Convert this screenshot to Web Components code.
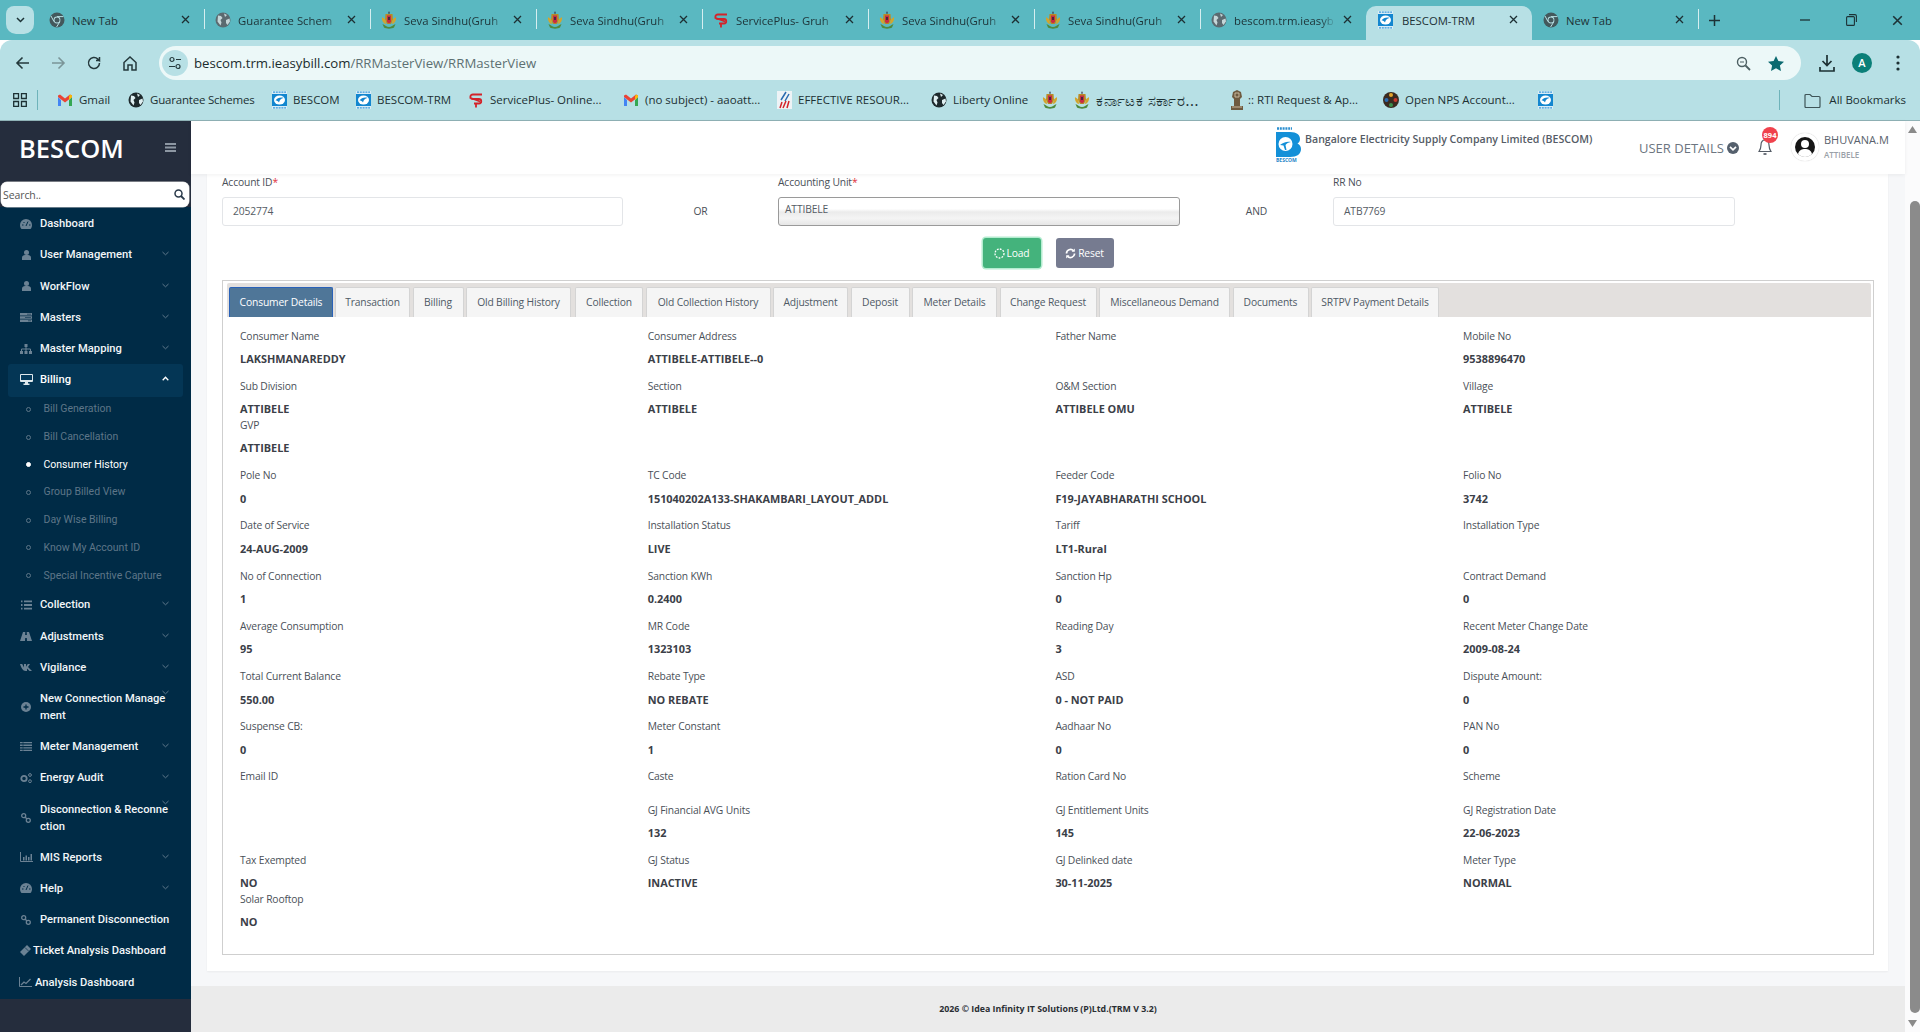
<!DOCTYPE html>
<html><head><meta charset="utf-8"><title>BESCOM-TRM</title>
<style>
html,body{margin:0;height:1032px;overflow:hidden;background:#fff;font-family:"Open Sans","Noto Sans",sans-serif}
body{display:flex;flex-direction:column}
</style></head>
<body>
<browser-chrome></browser-chrome>
<app-shell></app-shell>
<script>
const S=(w,h,vb,c)=>`<svg width="${w}" height="${h}" viewBox="${vb}" style="display:block;flex:none">${c}</svg>`;
const FAV={
 chrome:S(16,16,'0 0 16 16','<circle cx="8" cy="8" r="7.5" fill="#43585c"/><circle cx="8" cy="8" r="3.4" fill="#b7dfe3"/><circle cx="8" cy="8" r="2.5" fill="#43585c"/><path d="M8 4.6h6.4M5 9.6L2 4M10.8 9.8L7.6 15" stroke="#b7dfe3" stroke-width="1"/>'),
 globe:S(16,16,'0 0 16 16','<circle cx="8" cy="8" r="7.5" fill="#5b6a70"/><path d="M3 3.5l3 .5 1.500 2-2 2 1 2.500-1 3-3-4zM9 1.500l3 1.500-2 2zM11 8l3.500-1.500.5 3-2.500 3.500-1.500-2z" fill="#c5d6d8"/>'),
 globeDark:S(16,16,'0 0 16 16','<circle cx="8" cy="8" r="7.5" fill="#1e2a2d"/><path d="M3 3.500l3 .5 1.500 2-2 2 1 2.500-1 3-3-4zM9 1.500l3 1.500-2 2zM11 8l3.500-1.500.5 3-2.500 3.500-1.500-2z" fill="#dfeff1"/>'),
 emblem:S(16,18,'0 0 16 18','<path d="M8 0l1 2.500H7z" fill="#3c3340"/><path d="M4.500 3h7l.5 6-2 4H6L4 9z" fill="#b98a26"/><path d="M1 6c1 1 2.500 1.500 3.500 3L5 13C3 13 .5 10 1 6zM15 6c-1 1-2.500 1.500-3.500 3L11 13c2 0 4.500-3 4-7z" fill="#d2a52e"/><path d="M6 4.500h4v6.500l-2 1.500L6 11z" fill="#c92b45"/><path d="M7.200 6h1.600v3H7.200z" fill="#2c2a38"/><path d="M1.500 13c3 1.500 4 3 6.500 3s3.500-1.500 6.500-3L13 16.500c-2 1.500-8 1.500-10 0z" fill="#4f8a3c"/>'),
 sp:S(16,16,'0 0 16 16','<path d="M14 2.500H5C1.500 2.500 1.500 7 5 7h6c3 0 3 4.500 0 4.500H6M1.500 5.500L12 9.500M8 11.500v4" fill="none" stroke="#d3232a" stroke-width="1.800"/>'),
 bescom:S(15,18,'0 0 15 18','<rect width="15" height="18" fill="#d8ecf7"/><path d="M1 1.200h13M1 16.800h13" stroke="#3a9ad8" stroke-width="1.200" stroke-dasharray="2 .8"/><rect y="3" width="15" height="12" fill="#1386cf"/><ellipse cx="7.500" cy="9" rx="5.500" ry="4.500" fill="#fff"/><path d="M3.500 9.500C5 7 9 6 11.500 7 9 7.500 7.500 9 7 11.500 6 10 5 9.500 3.500 9.500z" fill="#1386cf"/>'),
 gmail:S(16,13,'0 0 16 13','<path d="M1 3v9h3V6z" fill="#4285f4"/><path d="M15 3v9h-3V6z" fill="#34a853"/><path d="M1 3l7 5.500L15 3v-1.500L13 .5 8 4.500 3 .5 1 1.500z" fill="#ea4335"/><path d="M12 2.500l1-2 2 1V3l-3 3z" fill="#fbbc04"/>'),
 eff:S(15,18,'0 0 15 18','<rect width="15" height="18" fill="#eef3f6"/><path d="M9 1L4 9M12 3L8 10" stroke="#2b6bb0" stroke-width="1.500"/><path d="M5 11l-2 6M9 10l-3 7M12 10l-2 7" stroke="#d3232a" stroke-width="1.500"/>'),
 rti:S(14,20,'0 0 14 20','<path d="M3 2l4-2 4 2 1 5-2 2v7h3v4H1v-4h3V9L2 7z" fill="#6e5a40"/><path d="M5 3h4v4H5zM2 17h10" stroke="#c8b79c" stroke-width="1" fill="none"/>'),
 nps:S(16,18,'0 0 16 18','<circle cx="8" cy="9" r="8" fill="#3a2a20"/><circle cx="8" cy="4" r="2" fill="#e2a32b"/><circle cx="12.500" cy="9" r="2" fill="#c8372b"/><circle cx="8" cy="14" r="2" fill="#3b8f4b"/><circle cx="3.500" cy="9" r="2" fill="#2b6bb0"/>')
};
const X=(c='#1d2f33',s=9)=>S(s,s,'0 0 9 9',`<path d="M1 1l7 7M8 1L1 8" stroke="${c}" stroke-width="1.300"/>`);
const G='#6b8294';
const NI={
 dash:`<svg width="12" height="10" viewBox="0 0 12 10"><path d="M6 0a6 6 0 0 0-6 6c0 1.500.5 3 1.500 4h9C11.500 9 12 7.500 12 6a6 6 0 0 0-6-6z" fill="${G}"/><path d="M6 7L8 2.500M2 6h1.500M9 6h1.500M3.500 3l1 1" stroke="#002b46" stroke-width="1"/></svg>`,
 user:`<svg width="9" height="10" viewBox="0 0 9 10"><circle cx="4.500" cy="2.500" r="2.500" fill="${G}"/><path d="M0 10V7.500C0 6 1.500 5 3 5h3c1.500 0 3 1 3 2.500V10z" fill="${G}"/></svg>`,
 server:`<svg width="12" height="9" viewBox="0 0 12 9"><path d="M0 0h12v2.400H0zM0 3.300h12v2.400H0zM0 6.600h12V9H0z" fill="${G}"/><path d="M7 1.200h4M5 4.500h6M8 7.800h3" stroke="#002b46" stroke-width=".6"/></svg>`,
 map:`<svg width="12" height="10" viewBox="0 0 12 10"><path d="M4.500 0h3v3h-3zM0 7h3v3H0zM4.500 7h3v3h-3zM9 7h3v3H9z" fill="${G}"/><path d="M6 3v4M1.500 7V5h9v2" stroke="${G}" fill="none"/></svg>`,
 mon:`<svg width="13" height="11" viewBox="0 0 13 11"><path d="M0 1q0-1 1-1h11q1 0 1 1v6q0 1-1 1H8v1.500h1.500V11h-6V9.500H5V8H1Q0 8 0 7z" fill="#dfe8ec"/><path d="M1 1h11v5H1z" fill="#043a5c"/></svg>`,
 list:`<svg width="11" height="10" viewBox="0 0 11 10"><path d="M3 .5h8v1.800H3zM3 4.100h8v1.800H3zM3 7.700h8v1.800H3zM0 .5h1.500v1.800H0zM0 4.100h1.500v1.800H0zM0 7.700h1.500v1.800H0z" fill="${G}"/></svg>`,
 road:`<svg width="12" height="9" viewBox="0 0 12 9"><path d="M3 0h2.300l-.2 3h1.800L6.700 0H9l3 9H7l-.2-3H5.200L5 9H0z" fill="${G}"/></svg>`,
 vk:`<svg width="12" height="7" viewBox="0 0 12 7"><path d="M0 0h2.200L4 3.600V0h2v2.800L7.800 0H10L8 3l4 4H9.500L7 4.500V7H5.500C3 7 1 3.500 0 0z" fill="${G}"/></svg>`,
 plus:`<svg width="10" height="10" viewBox="0 0 10 10"><circle cx="5" cy="5" r="5" fill="${G}"/><path d="M5 2.500v5M2.500 5h5" stroke="#002b46" stroke-width="1.300"/></svg>`,
 rows:`<svg width="12" height="9" viewBox="0 0 12 9"><path d="M0 .5h12M0 3.200h12M0 5.900h12M0 8.500h12" stroke="${G}" stroke-width="1.400"/><path d="M3 0v9" stroke="#002b46" stroke-width=".6"/></svg>`,
 cogs:`<svg width="12" height="10" viewBox="0 0 12 10"><circle cx="4" cy="5.500" r="2.700" fill="none" stroke="${G}" stroke-width="1.800"/><circle cx="10" cy="2" r="1.400" fill="none" stroke="${G}"/><circle cx="10" cy="8.200" r="1.400" fill="none" stroke="${G}"/></svg>`,
 link:`<svg width="10" height="10" viewBox="0 0 10 10"><circle cx="2.700" cy="2.700" r="2" fill="none" stroke="${G}" stroke-width="1.300"/><circle cx="7.300" cy="7.300" r="2" fill="none" stroke="${G}" stroke-width="1.300"/><path d="M4 4l2 2" stroke="${G}" stroke-width="1.300"/></svg>`,
 bars:`<svg width="13" height="10" viewBox="0 0 13 10"><path d="M.5 0v9.500H13" stroke="${G}" fill="none"/><path d="M3 5h1.500v3.500H3zM5.500 3.500H7v5H5.500zM8 5h1.500v3.500H8zM10.500 2H12v6.500h-1.500z" fill="${G}"/></svg>`,
 ticket:`<svg width="11" height="11" viewBox="0 0 11 11"><path d="M7 0l4 4-7 7-4-4z" fill="${G}"/><path d="M5 2.500l3.500 3.500" stroke="#002b46" stroke-width=".7"/></svg>`,
 line:`<svg width="13" height="10" viewBox="0 0 13 10"><path d="M.5 0v9.500H13" stroke="${G}" fill="none"/><path d="M2 8l3-3 2 1.500L11.500 2" stroke="${G}" stroke-width="1.300" fill="none"/></svg>`
};
function def(tag,css,html){
 customElements.define(tag,class extends HTMLElement{
  connectedCallback(){ if(this.shadowRoot)return; const r=this.attachShadow({mode:'open'});
   const a=n=>this.getAttribute(n)||'';
   r.innerHTML=`<style>:host{display:block}${css}</style>`+(typeof html==='function'?html(a,this):html);}
 });
}
/* ---------- browser chrome ---------- */
def('browser-chrome','',`<tab-strip></tab-strip><tool-bar></tool-bar><bookmark-bar></bookmark-bar>`);
def('tab-strip',`:host{display:flex;height:40px;background:#5ab8c1;color:#1d3236}
 .dd{width:28px;height:28px;margin:6px 4px 0 6px;border-radius:8px 8px 10px 10px;background:#b7e0e5;display:flex;align-items:center;justify-content:center}
 .plus{margin:0 0 0 11px;align-self:center}
 .win{margin-left:auto;display:flex}
 .win span{width:46px;height:40px;display:flex;align-items:center;justify-content:center}`,
 ()=>`<div class="dd">${S(9,6,'0 0 9 6','<path d="M1 1l3.500 3.500L8 1" fill="none" stroke="#1d3236" stroke-width="1.500"/>')}</div>
 <chrome-tab icon="chrome" title-text="New Tab"></chrome-tab>
 <chrome-tab icon="globe" title-text="Guarantee Schem" fade></chrome-tab>
 <chrome-tab icon="emblem" title-text="Seva Sindhu(Gruh" fade></chrome-tab>
 <chrome-tab icon="emblem" title-text="Seva Sindhu(Gruh" fade></chrome-tab>
 <chrome-tab icon="sp" title-text="ServicePlus- Gruh" fade></chrome-tab>
 <chrome-tab icon="emblem" title-text="Seva Sindhu(Gruh" fade></chrome-tab>
 <chrome-tab icon="emblem" title-text="Seva Sindhu(Gruh" fade></chrome-tab>
 <chrome-tab icon="globe" title-text="bescom.trm.ieasyb" fade nosep></chrome-tab>
 <chrome-tab icon="bescom" title-text="BESCOM-TRM" active nosep></chrome-tab>
 <chrome-tab icon="chrome" title-text="New Tab"></chrome-tab>
 <div class="plus">${S(11,11,'0 0 11 11','<path d="M5.500 0v11M0 5.500h11" stroke="#1d3236" stroke-width="1.500"/>')}</div>
 <div class="win"><span>${S(10,2,'0 0 10 2','<path d="M0 1h10" stroke="#1d3236" stroke-width="1.300"/>')}</span>
 <span>${S(11,12,'0 0 11 12','<rect x=".6" y="2.600" width="7.800" height="8.800" rx="1" fill="none" stroke="#1d3236" stroke-width="1.100"/><path d="M3 .6h6q1.400 0 1.400 1.400v6" fill="none" stroke="#1d3236" stroke-width="1.100"/>')}</span>
 <span>${X('#1d3236',11)}</span></div>`);
def('chrome-tab',`:host{width:166px;height:34px;margin-top:6px;position:relative;display:flex;align-items:center;flex:none;font:11.300px/16px "Open Sans",sans-serif;box-sizing:border-box}
 :host([active]){background:#b7e0e5;border-radius:10px 10px 0 0}
 .ic{position:absolute;left:11px;top:4px;width:16px;height:20px;display:flex;align-items:center;justify-content:center}
 :host([active]) .ic{left:11px}
 .t{position:absolute;left:34px;top:7px;width:102px;white-space:nowrap;overflow:hidden}
 :host([active]) .t{left:36px}
 :host([fade]) .t{-webkit-mask-image:linear-gradient(90deg,#000 85%,transparent)}
 .x{position:absolute;left:143px;top:9px}
 .sep{position:absolute;right:-1px;top:3px;width:1px;height:20px;background:#d6eef0}
 :host([nosep]) .sep,:host([active]) .sep{display:none}`,
 a=>`<span class="ic">${FAV[a('icon')]}</span><span class="t">${a('title-text')}</span><span class="x">${X()}</span><span class="sep"></span>`);
def('tool-bar',`:host{display:flex;align-items:center;height:34px;padding-top:6px;background:#b7e0e5;border-radius:12px 12px 0 0}
 .nav{width:36px;display:flex;justify-content:center;flex:none}
 .addr{flex:none;width:1642px;height:34px;margin-left:11px;background:#ecf8f8;border-radius:17px;display:flex;align-items:center;font:13.200px/18px "Open Sans",sans-serif;color:#5d7072}
 .tune{width:26px;height:26px;margin-left:3px;border-radius:50%;background:#b7e0e5;display:flex;align-items:center;justify-content:center;flex:none}
 .u{margin-left:6px;white-space:nowrap}.u b{font-weight:400;color:#1b2c2e}
 .r{margin-left:auto;display:flex;align-items:center;gap:17px;padding-right:17px}
 .ac{display:flex;align-items:center;flex:none}
 .av{width:20px;height:20px;border-radius:50%;background:#0a7f78;color:#fff;font:600 11px/20px "Open Sans",sans-serif;text-align:center;display:block}`,
 ()=>`<span class="nav" style="margin-left:4px">${S(15,14,'0 0 15 14','<path d="M14 7H2M7.500 1.500L2 7l5.500 5.500" fill="none" stroke="#24393c" stroke-width="1.600"/>')}</span>
 <span class="nav">${S(15,14,'0 0 15 14','<path d="M1 7h12M7.500 1.500L13 7l-5.500 5.500" fill="none" stroke="#7b9598" stroke-width="1.600"/>')}</span>
 <span class="nav">${S(14,14,'0 0 14 14','<path d="M12.500 7a5.500 5.500 0 1 1-1.600-3.900L12.500 4.600V1M12.500 4.600H9" fill="none" stroke="#24393c" stroke-width="1.500"/>')}</span>
 <span class="nav">${S(14,15,'0 0 14 15','<path d="M1 6.500L7 1l6 5.500V14H9V9H5v5H1z" fill="none" stroke="#24393c" stroke-width="1.500"/>')}</span>
 <div class="addr"><span class="tune">${S(14,14,'0 0 14 14','<circle cx="4" cy="3.500" r="2" fill="none" stroke="#24393c" stroke-width="1.200"/><path d="M8 3.500h5M1 10.500h6" stroke="#24393c" stroke-width="1.200"/><circle cx="10" cy="10.500" r="2" fill="none" stroke="#24393c" stroke-width="1.200"/>')}</span>
 <span class="u"><b>bescom.trm.ieasybill.com</b>/RRMasterView/RRMasterView</span>
 <span class="r">${S(15,15,'0 0 15 15','<circle cx="6" cy="6" r="4.500" fill="none" stroke="#4c5f62" stroke-width="1.400"/><path d="M9.500 9.500L14 14" stroke="#4c5f62" stroke-width="1.800"/><path d="M4 6h4" stroke="#4c5f62"/>')}${S(16,15,'0 0 16 15','<path d="M8 0l2.400 5 5.600.7-4.100 3.800 1.100 5.500L8 12.300 3 15l1.100-5.500L0 5.700 5.600 5z" fill="#0b6a70"/>')}</span></div>
 <span class="ac" style="margin-left:18px">${S(16,17,'0 0 16 17','<path d="M8 0v10M3.500 6L8 10.500 12.500 6M1 12v4h14v-4" fill="none" stroke="#1d3033" stroke-width="1.700"/>')}</span>
 <span class="av" style="margin-left:17px;flex:none">A</span>
 <span class="ac" style="margin-left:24px">${S(4,16,'0 0 4 16','<circle cx="2" cy="2" r="1.600" fill="#1d3033"/><circle cx="2" cy="8" r="1.600" fill="#1d3033"/><circle cx="2" cy="14" r="1.600" fill="#1d3033"/>')}</span>`);
def('bookmark-bar',`:host{display:flex;align-items:center;height:40px;background:#b7e0e5;border-bottom:1px solid #8fb2b6;font:11.500px/16px "Open Sans",sans-serif;color:#1c3033;box-sizing:content-box}
 .sep{width:1px;height:20px;background:#6eb3ba;flex:none}
 .all{margin-left:auto;display:flex;align-items:center;gap:8px;padding-right:14px}`,
 ()=>`<span style="margin-left:13px;display:flex">${S(14,14,'0 0 14 14','<path d="M.7.7h4.800v4.800H.7zM8.500.7h4.800v4.800H8.500zM.7 8.500h4.800v4.800H.7zM8.500 8.500h4.800v4.800H8.500z" fill="none" stroke="#1c3033" stroke-width="1.300"/>')}</span>
 <span class="sep" style="margin-left:10px"></span>
 <bm-item w="71" style="margin-left:20px" icon="gmail">Gmail</bm-item>
 <bm-item w="143" icon="globeDark"><span style="letter-spacing:-.2px">Guarantee Schemes</span></bm-item>
 <bm-item w="84" icon="bescom">BESCOM</bm-item>
 <bm-item w="113" icon="bescom">BESCOM-TRM</bm-item>
 <bm-item w="155" icon="sp">ServicePlus- Online...</bm-item>
 <bm-item w="153" icon="gmail">(no subject) - aaoatt...</bm-item>
 <bm-item w="155" icon="eff">EFFECTIVE RESOUR...</bm-item>
 <bm-item w="111" icon="globeDark">Liberty Online</bm-item>
 <bm-item w="32" icon="emblem"></bm-item>
 <bm-item w="155" icon="emblem"><span style="font:14.500px/16px 'Noto Sans','DejaVu Sans',sans-serif;letter-spacing:.6px">ಕರ್ನಾಟಕ ಸರ್ಕಾರ...</span></bm-item>
 <bm-item w="154" icon="rti"><span style="margin-left:-3px">:: RTI Request &amp; Ap...</span></bm-item>
 <bm-item w="154" icon="nps">Open NPS Account...</bm-item>
 <bm-item w="30" icon="bescom"></bm-item>
 <div class="all"><span class="sep" style="margin-right:16px"></span>${S(17,15,'0 0 17 15','<path d="M1 13.500V2.500q0-1 1-1h4l2 2h7q1 0 1 1v9q0 1-1 1H2q-1 0-1-1z" fill="none" stroke="#3f5558" stroke-width="1.200"/>')}<span>All Bookmarks</span></div>`);
def('bm-item',`:host{display:flex;align-items:center;gap:6px;flex:none;white-space:nowrap}
 .i{width:16px;display:flex;justify-content:center;flex:none;margin-left:-1px}`,
 (a,e)=>{e.style.width=a('w')+'px';return `<span class="i">${FAV[a('icon')]}</span><slot></slot>`});
/* ---------- app shell ---------- */
def('app-shell',`:host{flex:1;display:flex;min-height:0;height:911px}
 main-pane{flex:1;min-width:0}`,`<side-nav></side-nav><main-pane></main-pane><page-scroll></page-scroll>`);
def('page-scroll',`:host{width:15px;flex:none;background:#fbfbfc;display:flex;flex-direction:column;align-items:center}
 .up{margin-top:5px}.th{width:10px;margin:68px 0 0 4px;height:812px;background:#8b8b8b;border-radius:5px}
 .dn{margin-top:7px}`,
 ()=>`<span class="up">${S(9,7,'0 0 9 7','<path d="M4.500 0L9 7H0z" fill="#8a8a8a"/>')}</span><div class="th"></div><span class="dn">${S(9,7,'0 0 9 7','<path d="M4.500 7L9 0H0z" fill="#8a8a8a"/>')}</span>`);
def('side-nav',`:host{width:191px;flex:none;background:#252d3d;display:flex;flex-direction:column;font-family:Roboto,sans-serif}
 .brand{height:61px;display:flex;align-items:center;box-sizing:border-box;padding:0 15px 8px 19px;color:#fff;font:600 25.500px/32px "Open Sans",sans-serif;justify-content:space-between}
 .search{height:25px;margin:0 2px 0 1px;background:#fff;border-radius:6px;display:flex;align-items:center;justify-content:space-between;padding:0 4px 0 2px;font:10.500px/16px "Open Sans",sans-serif;letter-spacing:-.1px;color:#555;position:relative;z-index:1;box-shadow:0 0 0 .5px #ccc}
 nav{background:#002b46;padding:1.200px 0 1px}`,
 ()=>`<div class="brand"><span>BESCOM</span>${S(11,9,'0 0 11 9','<path d="M0 0h11v2H0zM0 3.500h11v2H0zM0 7h11v2H0z" fill="#8d97a3"/>')}</div>
 <div class="search"><span>Search..</span>${S(11,11,'0 0 11 11','<circle cx="4.500" cy="4.500" r="3.500" fill="none" stroke="#2a3a4a" stroke-width="1.500"/><path d="M7 7l3.500 3.500" stroke="#2a3a4a" stroke-width="1.800"/>')}</div>
 <nav>
 <nav-item icon="dash">Dashboard</nav-item>
 <nav-item icon="user" chev>User Management</nav-item>
 <nav-item icon="user" chev>WorkFlow</nav-item>
 <nav-item icon="server" chev>Masters</nav-item>
 <nav-item icon="map" chev>Master Mapping</nav-item>
 <nav-item icon="mon" chev open>Billing</nav-item>
 <div>
 <nav-sub>Bill Generation</nav-sub><nav-sub>Bill Cancellation</nav-sub><nav-sub on>Consumer History</nav-sub><nav-sub>Group Billed View</nav-sub><nav-sub>Day Wise Billing</nav-sub><nav-sub>Know My Account ID</nav-sub><nav-sub>Special Incentive Capture</nav-sub>
 </div>
 <nav-item icon="list" chev>Collection</nav-item>
 <nav-item icon="road" chev>Adjustments</nav-item>
 <nav-item icon="vk" chev>Vigilance</nav-item>
 <nav-item icon="plus" chev top>New Connection Management</nav-item>
 <nav-item icon="rows" chev>Meter Management</nav-item>
 <nav-item icon="cogs" chev>Energy Audit</nav-item>
 <nav-item icon="link" chev top>Disconnection &amp; Reconnection</nav-item>
 <nav-item icon="bars" chev>MIS Reports</nav-item>
 <nav-item icon="dash" chev>Help</nav-item>
 <nav-item icon="link" tight="40">Permanent Disconnection</nav-item>
 <nav-item icon="ticket" tight="33">Ticket Analysis Dashboard</nav-item>
 <nav-item icon="line" tight="35">Analysis Dashboard</nav-item>
 </nav>`);
def('nav-item',`:host{display:flex;align-items:center;position:relative;padding:7.100px 0;font:500 11.200px/17px Roboto,sans-serif;color:#f2f6f8}
 :host([open]){color:#fff}
 :host([open])::before{content:"";position:absolute;left:8px;right:8px;top:0;bottom:-1.500px;background:#043655;border-radius:3px}
 .i{position:absolute;left:19px;top:0;bottom:0;width:14px;display:flex;align-items:center;justify-content:center}
 .t{position:relative;margin-left:40px;width:129px;word-break:break-all}
 .c{position:absolute;left:162px;top:12px}
 :host([top]) .c{top:7px}`,
 (a,e)=>{const t=a('tight');const open=e.hasAttribute('open');
  return `<span class="i" ${t?'style="width:13px"':''}>${NI[a('icon')]}</span><span class="t" ${t?`style="margin-left:${t}px;width:150px"`:''}><slot></slot></span>`+
  (e.hasAttribute('chev')?`<span class="c">${open?S(7,5,'0 0 7 5','<path d="M.7 4.300L3.500 1.300l2.800 3" fill="none" stroke="#fff" stroke-width="1.300"/>'):S(7,5,'0 0 7 5','<path d="M.5 1l3 2.800L6.500 1" fill="none" stroke="#5f7a8c" stroke-width="1"/>')}</span>`:'')});
def('nav-sub',`:host{display:block;position:relative;height:27.720px;font:400 10.500px/27.700px Roboto,sans-serif;color:#5e7688;padding-left:43.500px;white-space:nowrap}
 :host([on]){color:#fff}
 :host::before{content:"";position:absolute;left:26px;top:11.500px;width:3px;height:3px;border:1px solid #5e7688;border-radius:50%}
 :host([on])::before{background:#fff;border-color:#fff}`,`<slot></slot>`);
def('main-pane',`:host{display:flex;flex-direction:column;background:#f6f7f9;height:911px}`,
 `<top-bar></top-bar><content-card></content-card><page-foot></page-foot>`);
def('top-bar',`:host{height:53px;background:#fff;box-shadow:0 1px 4px rgba(0,0,0,.06);display:flex;position:relative;z-index:2;color:#6c757d}
 .logo{margin:4px 0 0 1085px;flex:none}
 .co{margin:10px 0 0 4px;font:600 10.600px/16px "Open Sans",sans-serif;color:#555c66;white-space:nowrap;flex:none;width:334px}
 .ud{margin-top:18px;font:400 13px/18px "Open Sans",sans-serif;color:#6c7580;white-space:nowrap;display:flex;align-items:center;gap:3px;flex:none;width:119px;align-self:flex-start}
 .bell{position:relative;flex:none;width:35px;margin-top:18px}
 .bd{position:absolute;left:4px;top:-12px;width:16px;height:16px;border-radius:50%;background:#f0424d;color:#fff;font:700 7.500px/16px "Open Sans",sans-serif;text-align:center}
 .av{flex:none;width:28px;height:28px;margin:12px 0 0 -2px;border-radius:50%;background:#fff;box-shadow:0 0 1px #bbb;display:flex;align-items:center;justify-content:center}
 .nm{margin:11px 0 0 5px;font:400 11px/16px "Open Sans",sans-serif;color:#59626c}
 .nm small{display:block;font:600 8px/12px "Open Sans",sans-serif;color:#9aa1a8;margin-top:1px}`,
 ()=>`<span class="logo">${S(25,37,'0 0 25 37','<path d="M1 3.500h15" stroke="#2b8fd0" stroke-width="2.400" stroke-dasharray="2 .8"/><path d="M0 7h14c7 0 10 3 10 7 0 2-1 3.500-2.500 4.500 2.200 1 3.500 3 3.500 5.500 0 5-4 8-11 8H0z" fill="#1490d8"/><circle cx="9.500" cy="19" r="7" fill="#fff"/><path d="M4 20c3-2.500 7-4 11-3-3 .5-5 2-5.500 3l1 5H9l-1.500-4.500z" fill="#1490d8"/><text x="0" y="36.500" font-family="Open Sans,sans-serif" font-weight="700" font-size="5" fill="#1f86c8">BESCOM</text>')}</span>
 <span class="co">Bangalore Electricity Supply Company Limited (BESCOM)</span>
 <span class="ud">USER DETAILS ${S(12,12,'0 0 12 12','<circle cx="6" cy="6" r="6" fill="#55606d"/><path d="M3 4.800L6 7.800l3-3" fill="none" stroke="#fff" stroke-width="1.700"/>')}</span>
 <span class="bell">${S(14,17,'0 0 14 17','<path d="M7 1C4 1 3 3.500 3 6c0 3-1 5-2 6.500h12C12 11 11 9 11 6c0-2.500-1-5-4-5z" fill="none" stroke="#555c66" stroke-width="1.200"/><path d="M5.500 15h3" stroke="#555c66" stroke-width="1.700"/>')}<span class="bd">894</span></span>
 <span class="av">${S(20,22,'0 0 20 22','<circle cx="10" cy="11" r="10" fill="#151515"/><circle cx="10" cy="8" r="4" fill="#fff"/><path d="M3 18c1-4 4-5 7-5s6 1 7 5c-2 2-4 3-7 3s-5-1-7-3z" fill="#fff"/>')}</span>
 <span class="nm">BHUVANA.M<small>ATTIBELE</small></span>`);
def('content-card',`:host{height:797px;margin:0 17px 0 16px;background:#fff;box-shadow:0 1px 2px rgba(0,0,0,.05);box-sizing:border-box;padding:0 14px 0 15px;font:10.300px/16px "Open Sans",sans-serif;letter-spacing:-.15px;color:#4a5058;flex:none}
 .f{display:grid;grid-template-columns:401px 155px 402px 153px 402px}
 .sep{padding-top:23px;line-height:29px;text-align:center;color:#4a5058}
 .btns{display:flex;justify-content:center;gap:15px;margin:12px 0;height:30px}`,
 ()=>`<div class="f"><form-field label="Account ID" req value="2052774"></form-field><div class="sep">OR</div><form-field label="Accounting Unit" req value="ATTIBELE" sel></form-field><div class="sep">AND</div><form-field label="RR No" value="ATB7769"></form-field></div>
 <div class="btns"><act-btn kind="load">Load</act-btn><act-btn kind="reset">Reset</act-btn></div>
 <details-box></details-box>`);
def('form-field',`:host{display:block}
 .l{height:16px;line-height:16px;color:#4a5058}.l i{font-style:normal;color:#e0333c}
 .b{margin-top:7px;height:29px;border:1px solid #e3e5e8;border-radius:3px;box-sizing:border-box;line-height:27px;padding:0 10px;color:#555c64;background:#fff}
 :host([sel]) .b{border-color:#9a9a9a;padding:0 6px;line-height:23px;background:linear-gradient(#fff 40%,#ebebeb 52%,#f4f4f4 75%,#e6e6e6)}`,
 (a,e)=>`<div class="l">${a('label')}${e.hasAttribute('req')?'<i>*</i>':''}</div><div class="b">${a('value')}</div>`);
def('act-btn',`:host{width:58px;height:30px;border-radius:3px;display:flex;align-items:center;justify-content:center;gap:2px;color:#fff;font:500 10.300px/16px "Open Sans",sans-serif;box-sizing:border-box}
 :host([kind=load]){background:#44b37c;box-shadow:0 0 0 1.500px #b4ecd0}
 :host([kind=reset]){background:#767b90}`,
 a=>(a('kind')=='load'?S(11,11,'0 0 11 11','<circle cx="5.500" cy="5.500" r="4.500" fill="none" stroke="#fff" stroke-width="1.300" stroke-dasharray="1.800 1.200"/>'):S(11,11,'0 0 11 11','<path d="M1.500 5.500a4 4 0 0 1 7-2.700M9.500 5.500a4 4 0 0 1-7 2.700" fill="none" stroke="#fff" stroke-width="1.700"/><path d="M9.800.5v3.200H6.600zM1.200 10.500V7.300h3.200z" fill="#fff"/>'))+`<slot></slot>`);
def('details-box',`:host{display:block;height:675px;box-sizing:border-box;border:1px solid #cfcfcf;padding:2px 2px 0 4px}
 .bar{height:34px;background:#e3e0de;border-radius:2px 2px 0 0;display:flex;align-items:flex-end;padding-left:2px}
 .rows{padding:10.500px 0 0 13px}`,
 ()=>`<div class="bar">
 <tab-btn w="104" active>Consumer Details</tab-btn><tab-btn w="75">Transaction</tab-btn><tab-btn w="51">Billing</tab-btn><tab-btn w="105" style="margin-right:4px">Old Billing History</tab-btn><tab-btn w="68">Collection</tab-btn><tab-btn w="125">Old Collection History</tab-btn><tab-btn w="75">Adjustment</tab-btn><tab-btn w="59">Deposit</tab-btn><tab-btn w="85">Meter Details</tab-btn><tab-btn w="97">Change Request</tab-btn><tab-btn w="131">Miscellaneous Demand</tab-btn><tab-btn w="76">Documents</tab-btn><tab-btn w="128">SRTPV Payment Details</tab-btn>
 </div>
 <div class="rows">
 <info-row>
  <info-field l="Consumer Name" v="LAKSHMANAREDDY"></info-field><info-field l="Consumer Address" v="ATTIBELE-ATTIBELE--0"></info-field><info-field l="Father Name"></info-field><info-field l="Mobile No" v="9538896470"></info-field></info-row>
 <info-row h="39">
  <info-field l="Sub Division" v="ATTIBELE"></info-field><info-field l="Section" v="ATTIBELE"></info-field><info-field l="O&amp;M Section" v="ATTIBELE OMU"></info-field><info-field l="Village" v="ATTIBELE"></info-field></info-row>
 <info-row>
  <info-field l="GVP" v="ATTIBELE"></info-field></info-row>
 <info-row>
  <info-field l="Pole No" v="0"></info-field><info-field l="TC Code" v="151040202A133-SHAKAMBARI_LAYOUT_ADDL"></info-field><info-field l="Feeder Code" v="F19-JAYABHARATHI SCHOOL"></info-field><info-field l="Folio No" v="3742"></info-field></info-row>
 <info-row>
  <info-field l="Date of Service" v="24-AUG-2009"></info-field><info-field l="Installation Status" v="LIVE"></info-field><info-field l="Tariff" v="LT1-Rural"></info-field><info-field l="Installation Type"></info-field></info-row>
 <info-row>
  <info-field l="No of Connection" v="1"></info-field><info-field l="Sanction KWh" v="0.2400"></info-field><info-field l="Sanction Hp" v="0"></info-field><info-field l="Contract Demand" v="0"></info-field></info-row>
 <info-row>
  <info-field l="Average Consumption" v="95"></info-field><info-field l="MR Code" v="1323103"></info-field><info-field l="Reading Day" v="3"></info-field><info-field l="Recent Meter Change Date" v="2009-08-24"></info-field></info-row>
 <info-row>
  <info-field l="Total Current Balance" v="550.00"></info-field><info-field l="Rebate Type" v="NO REBATE"></info-field><info-field l="ASD" v="0 - NOT PAID"></info-field><info-field l="Dispute Amount:" v="0"></info-field></info-row>
 <info-row h="49.500">
  <info-field l="Suspense CB:" v="0"></info-field><info-field l="Meter Constant" v="1"></info-field><info-field l="Aadhaar No" v="0"></info-field><info-field l="PAN No" v="0"></info-field></info-row>
 <info-row h="34">
  <info-field l="Email ID"></info-field><info-field l="Caste"></info-field><info-field l="Ration Card No"></info-field><info-field l="Scheme"></info-field></info-row>
 <info-row h="50">
  <info-field></info-field><info-field l="GJ Financial AVG Units" v="132"></info-field><info-field l="GJ Entitlement Units" v="145"></info-field><info-field l="GJ Registration Date" v="22-06-2023"></info-field></info-row>
 <info-row h="39">
  <info-field l="Tax Exempted" v="NO"></info-field><info-field l="GJ Status" v="INACTIVE"></info-field><info-field l="GJ Delinked date" v="30-11-2025"></info-field><info-field l="Meter Type" v="NORMAL"></info-field></info-row>
 <info-row>
  <info-field l="Solar Rooftop" v="NO"></info-field></info-row>
 </div>`);
def('tab-btn',`:host{height:30px;box-sizing:border-box;border:1px solid #d4d4d4;border-bottom:0;border-radius:2px 2px 0 0;background:#f5f5f5;color:#4f5a66;text-align:center;margin-right:2.500px;white-space:nowrap;flex:none;line-height:29px}
 :host([active]){background:#4f7698;border-color:#2a62b8;color:#fff;margin-right:2px}`,
 (a,e)=>{e.style.width=a('w')+'px';return `<slot></slot>`});
def('info-row',`:host{display:grid;grid-template-columns:repeat(4,407.700px);align-content:start}`,
 (a,e)=>{e.style.height=(a('h')||'50.250')+'px';return `<slot></slot>`});
def('info-field',`:host{display:block;color:#4a5058}
 .l{height:16px;line-height:16px}
 .v{margin-top:7.500px;height:16px;font-size:10.900px;letter-spacing:0;line-height:16px;font-weight:700;color:#3b4048;white-space:nowrap}`,
 a=>`<div class="l">${a('l')}</div><div class="v">${a('v')}</div>`);
def('page-foot',`:host{margin-top:15px;height:46px;background:#ebebeb;display:flex;align-items:center;justify-content:center;font:700 8.800px/12px "Open Sans",sans-serif;color:#2a2e33;flex:none;box-sizing:border-box}`,
 `<span>2026 © Idea Infinity IT Solutions (P)Ltd.(TRM V 3.2)</span>`);
</script>
</body></html>
